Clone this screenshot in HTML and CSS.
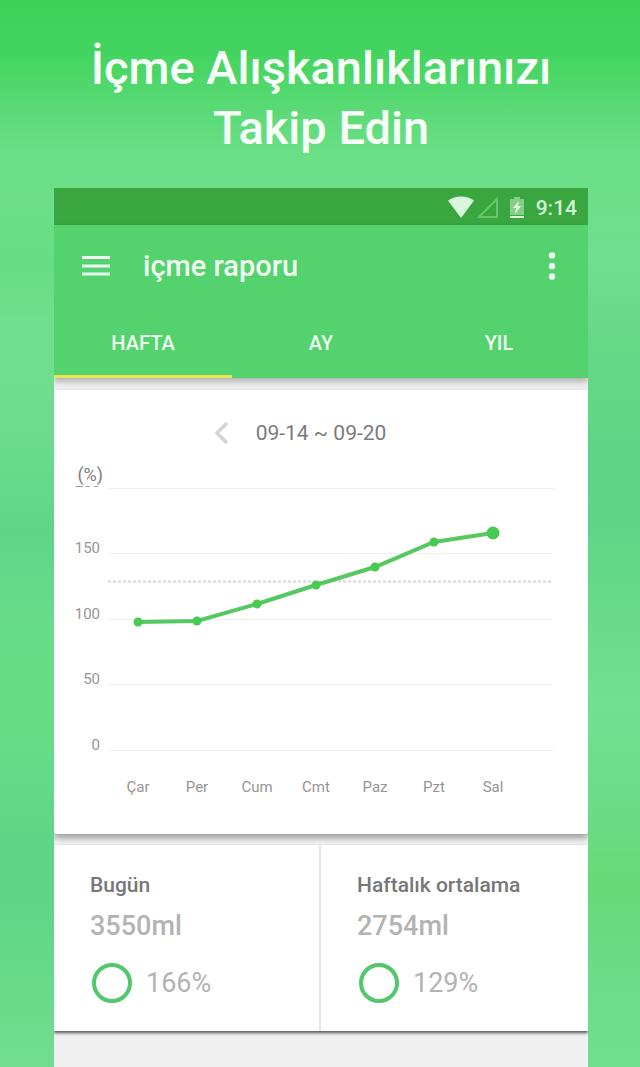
FILE: index.html
```html
<!DOCTYPE html>
<html lang="tr">
<head>
<meta charset="utf-8">
<meta name="viewport" content="width=device-width, initial-scale=1">
<title>İçme raporu</title>
<link rel="stylesheet" href="styles.css">
</head>
<body>
<main class="promo">
  <h1 class="headline">İçme Alışkanlıklarınızı<br>Takip Edin</h1>
  <section class="phone">
    <div class="status">
      <svg class="status-icons" width="78" height="24" viewBox="0 0 78 24" aria-hidden="true">
        <path d="M0 4.500C8-1 18-1 26 4.500L13 22Z" fill="#d9f7dc"/>
        <path d="M31 21L49 3V21Z" fill="none" stroke="#67c56b" stroke-width="2"/>
        <path d="M66 1h6v2h4v16H62V3h4Z" fill="#86cf88"/>
        <path d="M62 20h14v2H62Z" fill="#e3f8e4"/>
        <path d="M71 5L65 12h3l-1 6 6-8h-3Z" fill="#e3f8e4"/>
      </svg>
      <span class="clock">9:14</span>
    </div>
    <header class="appbar">
      <div class="toolbar">
        <button class="icon-button" type="button" aria-label="Menü">
          <svg width="28" height="20" viewBox="0 0 28 20"><path d="M0 1.500h28M0 10h28M0 18h28" stroke="#effcf1" stroke-width="3"/></svg>
        </button>
        <h2 class="title">içme raporu</h2>
        <button class="icon-button" type="button" aria-label="Diğer seçenekler">
          <svg width="8" height="28" viewBox="0 0 8 28" fill="#effcf1"><circle cx="4" cy="3.500" r="3.200"/><circle cx="4" cy="14" r="3.200"/><circle cx="4" cy="24.500" r="3.200"/></svg>
        </button>
      </div>
      <nav class="tabs">
        <button class="tab tab-active" type="button">HAFTA</button>
        <button class="tab" type="button">AY</button>
        <button class="tab" type="button">YIL</button>
      </nav>
    </header>
    <section class="card chart-card">
      <div class="range">
        <button class="icon-button" type="button" aria-label="Önceki hafta">
          <svg width="14" height="24" viewBox="0 0 14 24"><path d="M12 2L2 12l10 10" fill="none" stroke="#d4d4d4" stroke-width="3.500"/></svg>
        </button>
        <span>09-14 ~ 09-20</span>
        <span class="range-end"></span>
      </div>
      <svg class="chart" viewBox="0 0 534 340" role="img" aria-label="Haftalık içme yüzdesi">
        <g stroke="#efefef">
          <path d="M54 30.500H500M54 95.500H498M54 161.500H498M54 226.500H498M54 292.500H500"/>
        </g>
        <path d="M54 123.500H498" stroke="#d6d6d6" stroke-width="2" stroke-dasharray="3 2"/>
        <g class="axis-y">
          <text x="46" y="29">200</text>
          <rect x="18" y="6" width="34" height="22" fill="#fff"/>
          <text class="unit" x="49" y="23">(%)</text>
          <text x="46" y="95">150</text>
          <text x="46" y="161">100</text>
          <text x="46" y="226">50</text>
          <text x="46" y="292">0</text>
        </g>
        <polyline points="84,164 143,163 203,146 262,127 321,109 380,84 439,75" fill="none" stroke="#56c860" stroke-width="4"/>
        <g fill="#45cc50">
          <circle cx="84" cy="164" r="4.500"/><circle cx="143" cy="163" r="4.500"/><circle cx="203" cy="146" r="4.500"/><circle cx="262" cy="127" r="4.500"/><circle cx="321" cy="109" r="4.500"/><circle cx="380" cy="84" r="4.500"/><circle cx="439" cy="75" r="6.500"/>
        </g>
        <g class="axis-x">
          <text x="84" y="334">Çar</text><text x="143" y="334">Per</text><text x="203" y="334">Cum</text><text x="262" y="334">Cmt</text><text x="321" y="334">Paz</text><text x="380" y="334">Pzt</text><text x="439" y="334">Sal</text>
        </g>
      </svg>
    </section>
    <section class="card stats">
      <div class="stat">
        <h3 class="stat-name">Bugün</h3>
        <p class="stat-value">3550ml</p>
        <p class="stat-share"><span class="ring"></span>166%</p>
      </div>
      <div class="stat">
        <h3 class="stat-name">Haftalık ortalama</h3>
        <p class="stat-value">2754ml</p>
        <p class="stat-share"><span class="ring"></span>129%</p>
      </div>
    </section>
  </section>
</main>
</body>
</html>
```
FILE: styles.css
```css
* {
  box-sizing: border-box;
}

body,
h1,
h2,
h3,
p {
  margin: 0;
}

body {
  font-family: Roboto, "Noto Sans", sans-serif;
}

button {
  padding: 0;
  border: 0;
  background: none;
  font: inherit;
  color: inherit;
}

svg {
  display: block;
}

.promo {
  display: flex;
  flex-direction: column;
  min-height: 100vh;
  padding: 38px 52px 0 54px;
  background:
    linear-gradient(#3dd15a, #43d45f 5%, #59da75 10%, #69df86 14%, #6cdf88 18%, #68dd83 25%, #72df90 31%, #6cdc8b 41%, #5fd58b 50%, #68dc88 58%, #67de85 67%, #5dd488 82%, #6adb88 94%, #72dd91) left / 50% 100% no-repeat,
    linear-gradient(#3dd15a, #43d45f 5%, #59da75 10%, #69df86 14%, #6cdf88 18%, #70de90 25%, #66d886 32%, #5dd488 47%, #68da88 57%, #73df91 66%, #6cdc88 75%, #67d975 83%, #6cdb86 90%, #71de8e) right / 50% 100% no-repeat;
}

.headline {
  margin-bottom: 30px;
  text-align: center;
  white-space: nowrap;
  font-size: 47px;
  line-height: 60px;
  font-weight: 500;
  color: #f8fff8;
}

.phone {
  display: flex;
  flex: 1;
  flex-direction: column;
  overflow: hidden;
  background: #f0f0f0;
}

.status {
  display: flex;
  align-items: center;
  justify-content: flex-end;
  gap: 10px;
  height: 37px;
  padding: 2px 11px 0 0;
  background: #39a63f;
}

.clock {
  font-size: 21px;
  font-weight: 500;
  color: #d3f3d5;
}

.appbar {
  background: #53d26e;
  color: #effcf1;
  box-shadow: 0 4px 6px rgba(0, 0, 0, 0.25);
}

.toolbar {
  display: flex;
  align-items: center;
  height: 82px;
  padding: 0 32px 0 28px;
}

.title {
  flex: 1;
  margin-left: 33px;
  font-size: 29px;
  font-weight: 500;
}

.tabs {
  display: grid;
  grid-template-columns: repeat(3, 1fr);
  height: 71px;
}

.tab {
  padding-top: 4px;
  border-bottom: 3px solid transparent;
  font-size: 20px;
  font-weight: 500;
}

.tab-active {
  border-color: #e8e84c;
}

.card {
  background: #fff;
}

.chart-card {
  margin-top: 12px;
  padding: 30px 0 36px;
  border-radius: 0 0 3px 3px;
  box-shadow: 0 4px 6px rgba(0, 0, 0, 0.35);
}

.range {
  display: flex;
  align-items: center;
  justify-content: center;
  gap: 27px;
  height: 26px;
  margin-bottom: 12px;
  font-size: 21px;
  color: #7b7b7b;
}

.range-end {
  width: 14px;
}

.chart {
  width: 100%;
  height: auto;
}

.axis-y,
.axis-x {
  font-size: 15px;
  fill: #959595;
}

.axis-y {
  text-anchor: end;
}

.axis-x {
  text-anchor: middle;
}

.axis-y .unit {
  font-size: 18px;
  fill: #808080;
}

.stats {
  display: grid;
  grid-template-columns: 1fr 1fr;
  margin-top: 11px;
  box-shadow: 0 2px 3px rgba(0, 0, 0, 0.65);
}

.stat {
  padding: 26px 16px 28px 36px;
}

.stat:first-child {
  border-right: 2px solid #e3e3e3;
}

.stat-name {
  font-size: 21px;
  line-height: 28px;
  font-weight: 500;
  color: #777;
}

.stat-value,
.stat-share {
  font-size: 27px;
  font-weight: 500;
  color: #b3b3b3;
}

.stat-value {
  margin: 8px 0 18px;
  line-height: 38px;
}

.stat-share {
  display: flex;
  align-items: center;
  gap: 14px;
  margin-left: 2px;
  font-weight: 400;
}

.ring {
  width: 40px;
  height: 40px;
  border: 4px solid #52c76c;
  border-radius: 50%;
}
```
